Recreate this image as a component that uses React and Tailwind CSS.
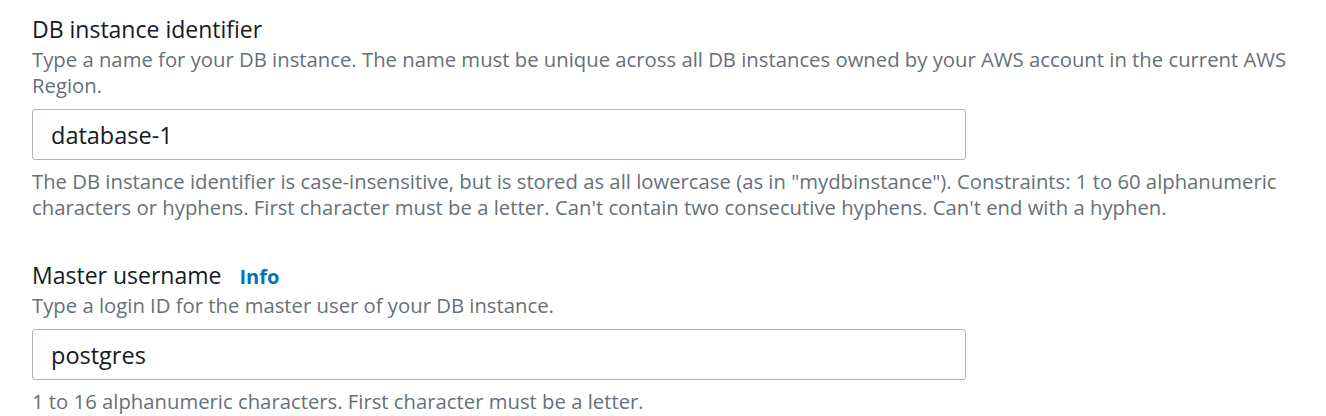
export default function App() {
  return (
    <div className="min-h-[416px] bg-white px-8 pt-[15px] font-['Open_Sans',sans-serif] text-[#16191f]">
      {/* DB instance identifier */}
      <div>
        <label className="block text-[23px] leading-[28px]">DB instance identifier</label>
        <p className="mt-[3px] text-[20.3px] leading-[26px] text-[#687078]">
          Type a name for your DB instance. The name must be unique across all DB instances owned by your AWS account in the current AWS Region.
        </p>
        <input
          type="text"
          defaultValue="database-1"
          className="mt-[11px] block h-[51px] w-[934px] rounded-[3px] border border-[#aab7b8] px-[18px] text-[23.5px] text-[#16191f] outline-none"
        />
        <p className="mt-2 text-[20.3px] leading-[26px] text-[#687078]">
          The DB instance identifier is case-insensitive, but is stored as all lowercase (as in "mydbinstance"). Constraints: 1 to 60 alphanumeric characters or hyphens. First character must be a letter. Can't contain two consecutive hyphens. Can't end with a hyphen.
        </p>
      </div>

      {/* Master username */}
      <div className="mt-[41px]">
        <div className="flex h-[28px] items-baseline gap-[18px]">
          <label className="text-[23px] leading-[28px]">Master username</label>
          <a href="#" className="text-[20px] leading-[28px] font-bold text-[#0073bb]">Info</a>
        </div>
        <p className="mt-[3px] text-[20.3px] leading-[26px] text-[#687078]">
          Type a login ID for the master user of your DB instance.
        </p>
        <input
          type="text"
          defaultValue="postgres"
          className="mt-[11px] block h-[51px] w-[934px] rounded-[3px] border border-[#aab7b8] px-[18px] text-[23.5px] text-[#16191f] outline-none"
        />
        <p className="mt-2 text-[20.3px] leading-[26px] text-[#687078]">
          1 to 16 alphanumeric characters. First character must be a letter.
        </p>
      </div>
    </div>
  )
}
